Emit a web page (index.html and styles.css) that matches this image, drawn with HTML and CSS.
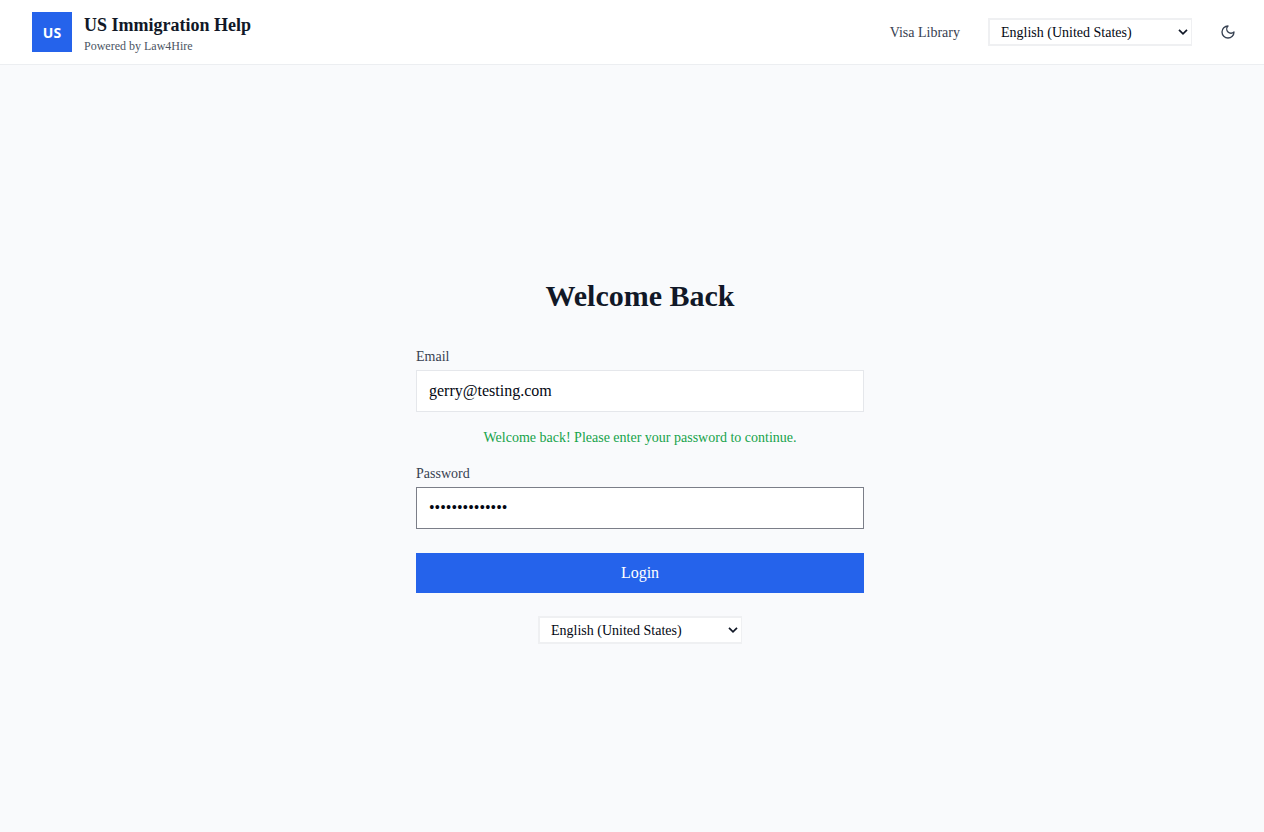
FILE: index.html
```html
<!DOCTYPE html>
<html lang="en">
<head>
<meta charset="utf-8">
<meta name="viewport" content="width=device-width, initial-scale=1">
<title>US Immigration Help</title>
<link rel="stylesheet" href="styles.css">
</head>
<body>
<header class="site-header">
  <div class="brand">
    <div class="brand-mark">US</div>
    <div class="brand-text">
      <div class="brand-name">US Immigration Help</div>
      <div class="brand-note">Powered by Law4Hire</div>
    </div>
  </div>
  <nav class="site-nav">
    <a class="nav-link" href="#">Visa Library</a>
    <select class="language" aria-label="Site language">
      <option>English (United States)</option>
    </select>
    <button class="theme-toggle" type="button" aria-label="Toggle dark mode">
      <svg class="moon" viewBox="0 0 24 24" fill="none" stroke="currentColor" stroke-width="2" stroke-linecap="round" stroke-linejoin="round" aria-hidden="true"><path d="M12 3a6 6 0 0 0 9 9 9 9 0 1 1-9-9Z"/></svg>
    </button>
  </nav>
</header>
<main class="page">
  <form class="login">
    <h1 class="title">Welcome Back</h1>
    <div class="field">
      <label class="label" for="email">Email</label>
      <input class="input" id="email" type="email" value="gerry@testing.com">
    </div>
    <p class="status">Welcome back! Please enter your password to continue.</p>
    <div class="field">
      <label class="label" for="password">Password</label>
      <input class="input input-active" id="password" type="password" value="abcdefghijklmn">
    </div>
    <button class="submit" type="button">Login</button>
    <select class="language language-form" aria-label="Language">
      <option>English (United States)</option>
    </select>
  </form>
</main>
</body>
</html>
```
FILE: styles.css
```css
* {
  box-sizing: border-box;
}

body {
  margin: 0;
  min-height: 100vh;
  display: flex;
  flex-direction: column;
  background: #f9fafc;
  color: #111827;
  font-family: "Liberation Serif", "Times New Roman", serif;
  font-size: 16px;
  line-height: 24px;
}

input,
select,
button {
  font-family: inherit;
  border-radius: 0;
}

.site-header {
  display: flex;
  align-items: center;
  justify-content: space-between;
  min-height: 65px;
  padding: 8px 16px 8px 32px;
  background: #ffffff;
  border-bottom: 1px solid #eceef1;
}

.brand {
  display: flex;
  align-items: center;
  gap: 12px;
}

.brand-mark {
  display: flex;
  align-items: center;
  justify-content: center;
  width: 40px;
  height: 40px;
  padding-top: 2px;
  background: #2563eb;
  color: #ffffff;
  font-family: "Open Sans", "Noto Sans", sans-serif;
  font-size: 14px;
  font-weight: 700;
}

.brand-text {
  padding-top: 4px;
}

.brand-name {
  font-size: 18px;
  font-weight: 700;
  line-height: 24px;
}

.brand-note {
  color: #4b5563;
  font-size: 12px;
  line-height: 18px;
}

.site-nav {
  display: flex;
  align-items: center;
}

.nav-link {
  margin-right: 28px;
  padding-top: 2px;
  color: #374151;
  font-size: 14px;
  line-height: 20px;
  text-decoration: none;
}

.language {
  width: 204px;
  height: 28px;
  padding: 0 24px 0 11px;
  border: 2px solid #eff0f2;
  border-right-width: 1px;
  appearance: none;
  background: #ffffff url("data:image/svg+xml,%3Csvg xmlns='http://www.w3.org/2000/svg' width='10' height='6' viewBox='0 0 10 6'%3E%3Cpath d='M1 .8l4 4 4-4' fill='none' stroke='%23111827' stroke-width='1.7'/%3E%3C/svg%3E") no-repeat right 3px center;
  color: #030712;
  font-size: 14px;
}

.theme-toggle {
  display: flex;
  margin-left: 16px;
  padding: 12px;
  border: 0;
  background: none;
  color: #374151;
}

.moon {
  width: 16px;
  height: 16px;
}

.page {
  flex: 1;
  display: flex;
  align-items: center;
  justify-content: center;
  padding: 25px 0 0 16px;
}

.login {
  display: flex;
  flex-direction: column;
  width: 100%;
  max-width: 448px;
}

.title {
  margin: 0 0 32px;
  font-size: 30px;
  font-weight: 700;
  line-height: 36px;
  text-align: center;
}

.field {
  display: flex;
  flex-direction: column;
  gap: 2px;
}

.label {
  color: #374151;
  font-size: 14px;
  line-height: 22px;
}

.input {
  width: 100%;
  height: 42px;
  padding: 8px 12px;
  border: 1px solid #e5e7eb;
  background: #ffffff;
  color: #030712;
  font-size: 16px;
}

.input-active {
  border-color: #7b7e88;
}

.status {
  margin: 15px 0 14px;
  color: #16a34a;
  font-size: 14px;
  line-height: 22px;
  text-align: center;
}

.submit {
  height: 40px;
  margin: 24px 0 23px;
  border: 0;
  background: #2563eb;
  color: #ffffff;
  font-size: 16px;
}

.language-form {
  align-self: center;
}
```
